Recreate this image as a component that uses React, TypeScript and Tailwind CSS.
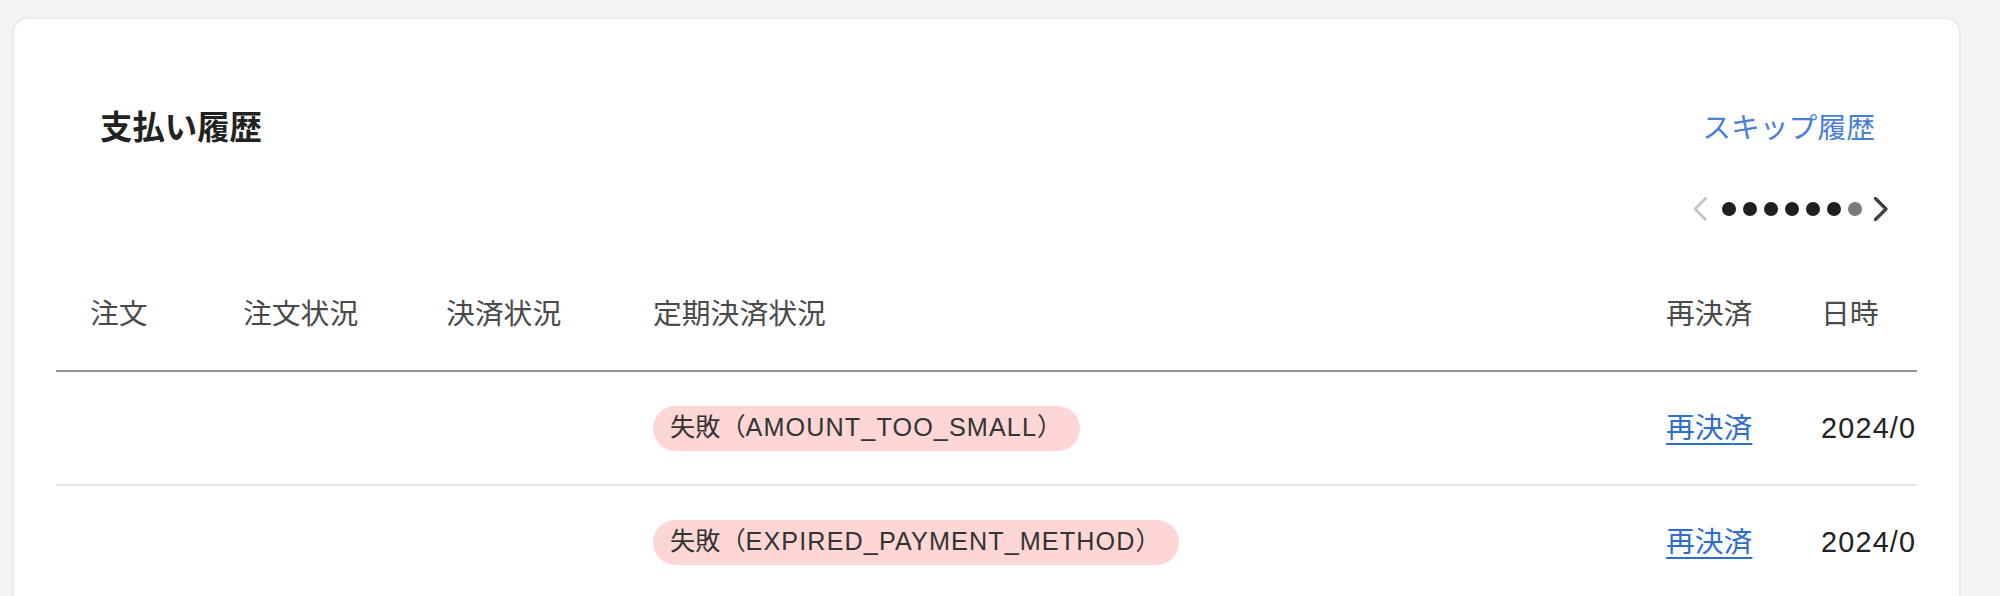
import React from "react";

const FONT = "font-['Liberation_Sans','Noto_Sans_CJK_JP',sans-serif]";

function ChevronLeft() {
  return (
    <svg width="14" height="24" viewBox="0 0 14 24" fill="none">
      <path d="M12.5 1.5 L2 12 L12.5 22.5" stroke="#c4c4c4" strokeWidth="2.8" strokeLinecap="round" strokeLinejoin="round" />
    </svg>
  );
}

function ChevronRight() {
  return (
    <svg width="14" height="24" viewBox="0 0 14 24" fill="none">
      <path d="M1.5 1.5 L12 12 L1.5 22.5" stroke="#3f3f3f" strokeWidth="3.2" strokeLinecap="round" strokeLinejoin="round" />
    </svg>
  );
}

const rows = [
  { code: "AMOUNT_TOO_SMALL", date: "2024/05/20 10:00" },
  { code: "EXPIRED_PAYMENT_METHOD", date: "2024/04/20 10:00" },
];

export default function App() {
  const dots = [0, 1, 2, 3, 4, 5, 6];
  return (
    <div className={`min-h-screen bg-[#f4f4f4] pt-[19px] ${FONT}`}>
      <div className="ml-[14px] w-[1945px] rounded-[14px] bg-white px-[42px] pt-[43px] pb-[40px] shadow-[0_0_4px_rgba(0,0,0,0.10)]">
        {/* Header */}
        <div className="mt-[42px] flex items-center justify-between px-[44px]">
          <h2 className="text-[32.4px] leading-[48px] font-bold text-[#222]">支払い履歴</h2>
          <a className="text-[28.8px] leading-[48px] text-[#4a7fd6] mr-[-2px]">スキップ履歴</a>
        </div>
        {/* Pagination */}
        <div className="mt-[44px] flex justify-end pr-[29px]">
          <div className="flex h-[26px] items-center">
            <ChevronLeft />
            <div className="ml-[15px] flex items-center gap-[7px]">
              {dots.map((d) => (
                <span
                  key={d}
                  className={d === 6 ? "h-[14px] w-[14px] rounded-full bg-[#7b7b7b]" : "h-[14px] w-[14px] rounded-full bg-[#1f1f1f]"}
                />
              ))}
            </div>
            <div className="ml-[12px]">
              <ChevronRight />
            </div>
          </div>
        </div>
        {/* Table */}
        <div className="mt-[37px] w-[1861px] overflow-hidden">
          <div className="w-[2031px]">
            <div className="grid h-[113px] grid-cols-[153px_203px_207px_1013px_155px_300px] items-center border-b-2 border-[#8e939a] text-[28.8px] leading-[43px] text-[#4a4a4a]">
              <div className="pl-[34px]">注文</div>
              <div className="pl-[34px]">注文状況</div>
              <div className="pl-[34px]">決済状況</div>
              <div className="pl-[34px]">定期決済状況</div>
              <div className="pl-[34px]">再決済</div>
              <div className="pl-[34px]">日時</div>
            </div>
            {rows.map((r, i) => (
              <div
                key={i}
                className="grid h-[114px] grid-cols-[153px_203px_207px_1013px_155px_300px] items-center border-b-2 border-[#e6e6e6]"
              >
                <div className="pl-[34px]" />
                <div className="pl-[34px]" />
                <div className="pl-[34px]" />
                <div className="pl-[34px]">
                  <span className="inline-flex h-[45px] items-center rounded-full bg-[#ffd6d6] pl-[17px] pr-[18px] text-[25.2px] text-[#333]">
                    失敗（<span className="tracking-[1.1px]">{r.code}</span>）
                  </span>
                </div>
                <div className="pl-[34px]">
                  <a className="text-[28.8px] leading-[43px] text-[#2f6ed0] underline underline-offset-[5px]">再決済</a>
                </div>
                <div className="pl-[34px] whitespace-nowrap text-[28.8px] leading-[43px] tracking-[1.2px] text-[#222]">{r.date}</div>
              </div>
            ))}
          </div>
        </div>
      </div>
    </div>
  );
}
